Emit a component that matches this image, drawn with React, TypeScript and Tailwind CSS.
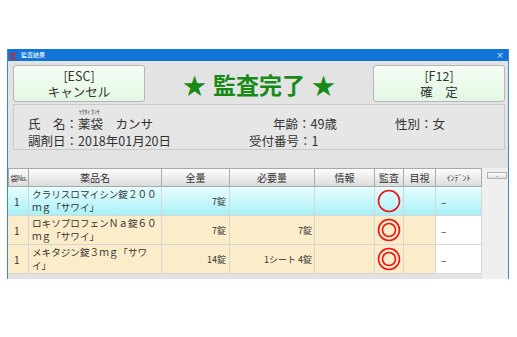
import React from "react";

const cols = [21, 133, 68, 85, 60, 29, 32, 46];
const heads = ["袋No.", "薬品名", "全量", "必要量", "情報", "監査", "目視", "ｲﾝﾃﾞﾝﾄ"];

type Row = { no: string; name: string[]; total: string; need: string; dbl: boolean; cyan: boolean };
const rows: Row[] = [
  { no: "1", name: ["クラリスロマイシン錠２００", "ｍｇ「サワイ」"], total: "7錠", need: "", dbl: false, cyan: true },
  { no: "1", name: ["ロキソプロフェンＮａ錠６０", "ｍｇ「サワイ」"], total: "7錠", need: "7錠", dbl: true, cyan: false },
  { no: "1", name: ["メキタジン錠３ｍｇ「サワ", "イ」"], total: "14錠", need: "1シート 4錠", dbl: true, cyan: false },
];

function Circle({ dbl }: { dbl: boolean }) {
  return (
    <svg width="24" height="24" viewBox="0 0 24 24">
      <circle cx="12" cy="12" r="10.5" fill="none" stroke="#ee1111" strokeWidth="1.6" />
      {dbl && <circle cx="12" cy="12" r="6.5" fill="none" stroke="#ee1111" strokeWidth="1.6" />}
    </svg>
  );
}

export default function App() {
  return (
    <div className="w-[517px] h-[337px] bg-white font-['Noto_Sans_CJK_JP',sans-serif] text-[#2a2a2a]">
      <div className="pt-[49px] pl-[7px]">
        <div className="w-[502px] h-[230px] flex flex-col border-x border-[#3a86d8] bg-[#e3e3e3]">
          {/* title bar */}
          <div className="h-[12px] bg-[#1174d8] flex items-center px-[1px]">
            <svg width="8" height="9" viewBox="0 0 8 9" className="ml-[1px]">
              <path d="M1.5 1 V7.5 H7" fill="none" stroke="#e81818" strokeWidth="1.6" />
              <path d="M6.5 1.5 L3 4.5" fill="none" stroke="#e81818" strokeWidth="1.4" />
            </svg>
            <span className="ml-[3px] text-[6px] leading-[8px] text-white">監査結果</span>
            <span className="ml-auto mr-[3px] text-[8px] leading-[8px] text-white">×</span>
          </div>
          {/* button row */}
          <div className="mt-[4px] h-[37px] flex items-center pl-[5px] pr-[3px]">
            <div className="w-[132px] h-[37px] rounded-[3px] border border-[#b4b8b4] bg-gradient-to-b from-[#f6fff6] to-[#e2f6e2] flex flex-col items-center justify-center gap-[1px] text-[12.5px] leading-[15px] text-[#333]">
              <span>[ESC]</span>
              <span>キャンセル</span>
            </div>
            <div className="flex-1 flex justify-center items-center gap-[7px] text-[23px] font-bold text-[#178a17] leading-[26px]">
              <span>★</span>
              <span>監査完了</span>
              <span>★</span>
            </div>
            <div className="w-[132px] h-[37px] rounded-[3px] border border-[#b4b8b4] bg-gradient-to-b from-[#f6fff6] to-[#e2f6e2] flex flex-col items-center justify-center gap-[1px] text-[12.5px] leading-[15px] text-[#333]">
              <span>[F12]</span>
              <span>確　定</span>
            </div>
          </div>
          {/* info box */}
          <div className="mt-[2px] ml-[5px] w-[492px] h-[46px] border border-[#c9c9c9] bg-[#e6e6e6] pl-[14px] pt-[4px] text-[12.5px] leading-[14px] text-[#333]">
            <div className="flex items-end">
              <div className="w-[245px] flex items-end">
                <span>氏　名：</span>
                <div className="flex flex-col">
                  <span className="text-[5.5px] leading-[6px] pl-[1px] mb-[2px] text-[#444]">ﾔｸﾀｲ ｶﾝｻ</span>
                  <span>薬袋　カンサ</span>
                </div>
              </div>
              <span className="w-[122px]">年齢：49歳</span>
              <span>性別：女</span>
            </div>
            <div className="flex mt-[3px]">
              <span className="w-[221px]">調剤日：2018年01月20日</span>
              <span>受付番号：1</span>
            </div>
          </div>
          {/* table */}
          <div className="mt-[18px] flex flex-1">
            <div className="w-[474px] flex flex-col">
              <div className="flex h-[19px]">
                {heads.map((h, i) => (
                  <div
                    key={i}
                    style={{ width: cols[i] }}
                    className={`shrink-0 flex items-center justify-center border-r border-b border-t border-[#a9a9a9] bg-gradient-to-b from-[#fdfdfd] to-[#dcdcdc] leading-[12px] text-[#333] ${i === 0 ? "text-[7px] tracking-[-0.5px] border-l" : i === 7 ? "text-[8px]" : "text-[10px]"}`}
                  >
                    {h}
                  </div>
                ))}
              </div>
              {rows.map((r, ri) => {
                const bg = r.cyan ? "bg-gradient-to-b from-[#e6feff] to-[#a6f0f6]" : "bg-[#fbecca]";
                return (
                  <div key={ri} className={`flex h-[29px] text-[10px] leading-[13px] text-[#333] ${bg}`}>
                    <div style={{ width: cols[0] }} className="shrink-0 border-r border-b border-[#d6d6d6] flex items-center pl-[6px]">{r.no}</div>
                    <div style={{ width: cols[1] }} className="shrink-0 border-r border-b border-[#d6d6d6] flex flex-col justify-center pl-[3px] text-[9.6px] whitespace-nowrap overflow-hidden">
                      <span>{r.name[0]}</span>
                      <span>{r.name[1]}</span>
                    </div>
                    <div style={{ width: cols[2] }} className="shrink-0 border-r border-b border-[#d6d6d6] flex items-center justify-end pr-[3px] text-[9px]">{r.total}</div>
                    <div style={{ width: cols[3] }} className="shrink-0 border-r border-b border-[#d6d6d6] flex items-center justify-end pr-[2px] text-[9px]">{r.need}</div>
                    <div style={{ width: cols[4] }} className="shrink-0 border-r border-b border-[#d6d6d6]"></div>
                    <div style={{ width: cols[5] }} className="shrink-0 border-r border-b border-[#d6d6d6] flex items-center justify-center">
                      <Circle dbl={r.dbl} />
                    </div>
                    <div style={{ width: cols[6] }} className="shrink-0 border-r border-b border-[#d6d6d6]"></div>
                    <div style={{ width: cols[7] }} className={`shrink-0 border-r border-b border-[#d6d6d6] flex items-center pl-[5px] ${r.cyan ? "" : "bg-white"}`}>–</div>
                  </div>
                );
              })}
            </div>
            <div className="flex-1 bg-[#efefef] pt-[4px] pl-[5px]">
              <div className="w-[20px] h-[7px] border border-[#b0b0b0] bg-gradient-to-b from-white to-[#e0e0e0] flex items-center justify-center text-[6px] leading-[6px] text-[#555]">-</div>
            </div>
          </div>
        </div>
      </div>
    </div>
  );
}
